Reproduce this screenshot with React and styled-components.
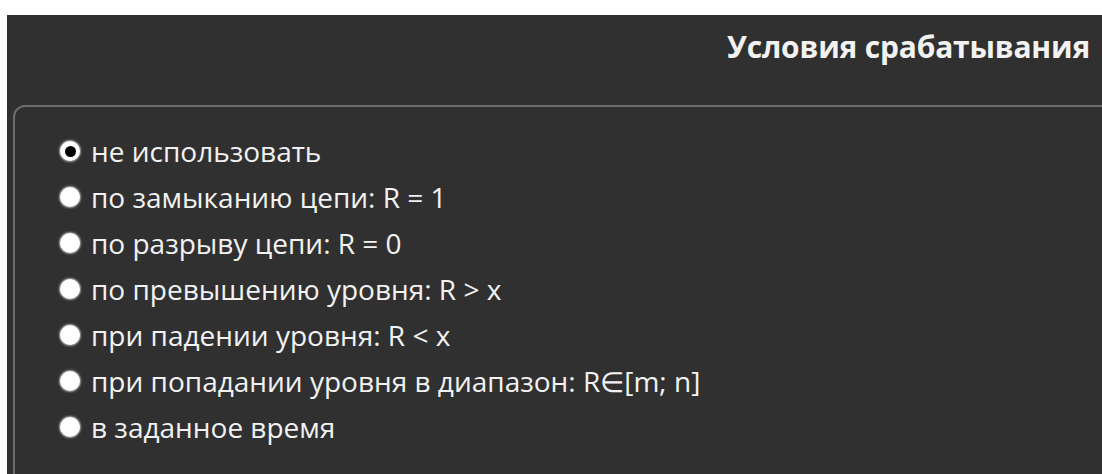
import React from "react";
import styled, { createGlobalStyle } from "styled-components";

const Global = createGlobalStyle`
  html, body, #root {
    height: 100%;
  }
  body {
    margin: 0;
    background: #ffffff;
    overflow: hidden;
    font-family: "Open Sans", "Noto Sans", sans-serif;
  }
`;

const Panel = styled.section`
  box-sizing: border-box;
  margin: 15px 0 0 7px;
  height: calc(100% - 15px);
  background: #303030;
  color: #f2f2f2;
  display: flex;
  flex-direction: column;
`;

const Header = styled.header`
  height: 90px;
  display: flex;
  align-items: center;
  justify-content: flex-end;
  padding: 0 12px 28px 0;
  box-sizing: border-box;
`;

const Title = styled.h2`
  margin: 0;
  font-size: 30px;
  font-weight: 700;
  letter-spacing: -0.2px;
`;

const Group = styled.fieldset`
  flex: 1;
  margin: 0 -40px -40px 6px;
  padding: 21px 0 0 45px;
  border: 2px solid #6c6c6c;
  border-radius: 12px;
  display: flex;
  flex-direction: column;
`;

const Option = styled.label`
  display: flex;
  align-items: center;
  gap: 11px;
  height: 46px;
  font-size: 28px;
  cursor: pointer;
`;

const Dot = styled.span`
  flex: none;
  width: 20px;
  height: 20px;
  border-radius: 50%;
  background: #ffffff;
  box-shadow: 0 0 2px 1px rgba(255, 255, 255, 0.55);
  display: flex;
  align-items: center;
  justify-content: center;

  &::after {
    content: "";
    width: ${(p) => (p.$checked ? "11px" : "0")};
    height: ${(p) => (p.$checked ? "11px" : "0")};
    border-radius: 50%;
    background: #000000;
  }
`;

const options = [
  "не использовать",
  "по замыканию цепи: R = 1",
  "по разрыву цепи: R = 0",
  "по превышению уровня: R > x",
  "при падении уровня: R < x",
  "при попадании уровня в диапазон: R∈[m; n]",
  "в заданное время",
];

export default function App() {
  const [selected, setSelected] = React.useState(0);
  return (
    <>
      <Global />
      <Panel>
        <Header>
          <Title>Условия срабатывания</Title>
        </Header>
        <Group>
          {options.map((text, i) => (
            <Option key={text} onClick={() => setSelected(i)}>
              <Dot $checked={selected === i} />
              {text}
            </Option>
          ))}
        </Group>
      </Panel>
    </>
  );
}
